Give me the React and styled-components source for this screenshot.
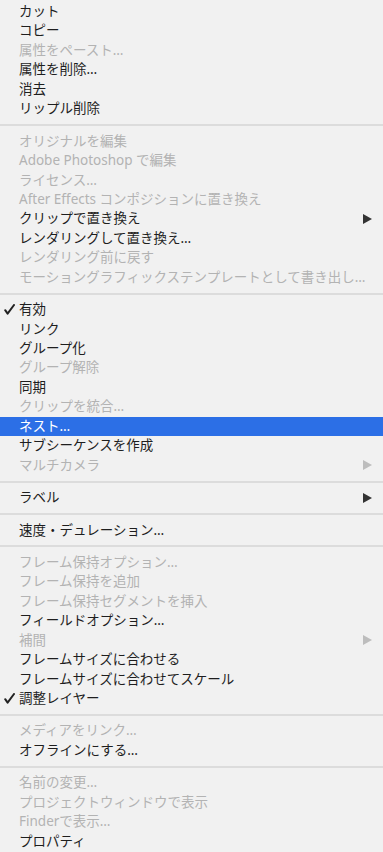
import React from "react";
import styled, { createGlobalStyle } from "styled-components";

const GlobalStyle = createGlobalStyle`
  html, body {
    margin: 0;
    padding: 0;
    background: #f1f1f1;
  }
`;

const MENU = [
  [
    { label: "カット" },
    { label: "コピー" },
    { label: "属性をペースト…", disabled: true },
    { label: "属性を削除…" },
    { label: "消去" },
    { label: "リップル削除" },
  ],
  [
    { label: "オリジナルを編集", disabled: true },
    { label: "Adobe Photoshop で編集", disabled: true },
    { label: "ライセンス…", disabled: true },
    { label: "After Effects コンポジションに置き換え", disabled: true },
    { label: "クリップで置き換え", submenu: true },
    { label: "レンダリングして置き換え…" },
    { label: "レンダリング前に戻す", disabled: true },
    { label: "モーショングラフィックステンプレートとして書き出し…", disabled: true },
  ],
  [
    { label: "有効", checked: true },
    { label: "リンク" },
    { label: "グループ化" },
    { label: "グループ解除", disabled: true },
    { label: "同期" },
    { label: "クリップを統合…", disabled: true },
    { label: "ネスト…", active: true },
    { label: "サブシーケンスを作成" },
    { label: "マルチカメラ", disabled: true, submenu: true },
  ],
  [{ label: "ラベル", submenu: true }],
  [{ label: "速度・デュレーション…" }],
  [
    { label: "フレーム保持オプション…", disabled: true },
    { label: "フレーム保持を追加", disabled: true },
    { label: "フレーム保持セグメントを挿入", disabled: true },
    { label: "フィールドオプション…" },
    { label: "補間", disabled: true, submenu: true },
    { label: "フレームサイズに合わせる" },
    { label: "フレームサイズに合わせてスケール" },
    { label: "調整レイヤー", checked: true },
  ],
  [
    { label: "メディアをリンク…", disabled: true },
    { label: "オフラインにする…" },
  ],
  [
    { label: "名前の変更…", disabled: true },
    { label: "プロジェクトウィンドウで表示", disabled: true },
    { label: "Finderで表示…", disabled: true },
    { label: "プロパティ" },
  ],
];

const Menu = styled.div`
  padding-top: 2px;
  background: #f1f1f1;
  font-family: "Noto Sans", "Noto Sans CJK JP", sans-serif;
  font-size: 13.5px;
  color: #222;
`;

const Separator = styled.div`
  height: 2px;
  margin: 5.5px 0;
  background: #dcdcdc;
`;

const Row = styled.div`
  display: flex;
  align-items: center;
  height: 19.45px;
  line-height: 19.45px;
  padding: 0 11px 0 4px;
  white-space: nowrap;
  color: ${(p) => (p.$active ? "#fff" : p.$disabled ? "#b3b3b3" : "#1e1e1e")};
  background: ${(p) => (p.$active ? "#2c6fe6" : "transparent")};
`;

const CheckSlot = styled.span`
  width: 15px;
  display: flex;
  align-items: center;
`;

const Label = styled.span`
  flex: 1;
`;

const Arrow = styled.span`
  width: 0;
  height: 0;
  border-top: 5px solid transparent;
  border-bottom: 5px solid transparent;
  border-left: 9px solid ${(p) => (p.$disabled ? "#bdbdbd" : "#333")};
`;

function Check() {
  return (
    <svg width="11" height="11" viewBox="0 0 11 11">
      <path
        d="M1.2 6.2 L3.6 9.6 L10 1"
        fill="none"
        stroke="#222"
        strokeWidth="2"
        strokeLinecap="round"
        strokeLinejoin="round"
      />
    </svg>
  );
}

function MenuRow({ item }) {
  return (
    <Row $disabled={item.disabled} $active={item.active}>
      <CheckSlot>{item.checked && <Check />}</CheckSlot>
      <Label>{item.label}</Label>
      {item.submenu && <Arrow $disabled={item.disabled} />}
    </Row>
  );
}

export default function App() {
  return (
    <>
      <GlobalStyle />
      <Menu>
        {MENU.map((section, i) => (
          <React.Fragment key={i}>
            {i > 0 && <Separator />}
            {section.map((item) => (
              <MenuRow key={item.label} item={item} />
            ))}
          </React.Fragment>
        ))}
      </Menu>
    </>
  );
}
